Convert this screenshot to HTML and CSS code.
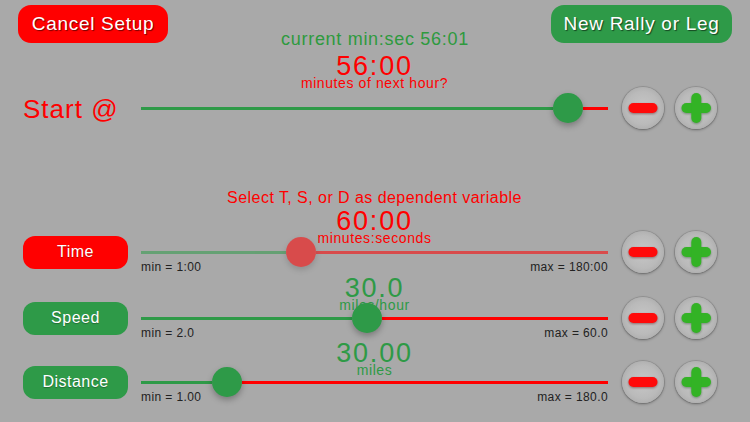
FILE: index.html
```html
<!DOCTYPE html>
<html>
<head>
<meta charset="utf-8">
<title>Rally Setup</title>
<link rel="stylesheet" href="styles.css">
</head>
<body>
<div class="screen">
  <header class="topbar">
    <button class="pill pill-red pill-top">Cancel Setup</button>
    <div class="current">current min:sec 56:01</div>
    <button class="pill pill-green pill-top pill-right">New Rally or Leg</button>
  </header>

  <section class="block block-start">
    <div class="value red">56:00</div>
    <div class="unit red">minutes of next hour?</div>
    <div class="ctrl">
      <div class="label-cell"><span class="start-label">Start @</span></div>
      <div class="track">
        <span class="seg seg-green" style="width:412px"></span>
        <span class="thumb thumb-green"></span>
        <span class="seg seg-red"></span>
      </div>
      <div class="steppers">
        <button class="step"><svg viewBox="0 0 42 42" width="42" height="42"><rect class="minus" x="6.5" y="16" width="29" height="10" rx="5"/></svg></button>
        <button class="step"><svg viewBox="0 0 42 42" width="42" height="42"><g class="plus"><rect x="6.5" y="16" width="29.5" height="10" rx="5"/><rect x="16.3" y="6" width="10" height="30" rx="5"/></g></svg></button>
      </div>
    </div>
  </section>

  <section class="block block-time">
    <div class="prompt red">Select T, S, or D as dependent variable</div>
    <div class="value red">60:00</div>
    <div class="unit red">minutes:seconds</div>
    <div class="ctrl">
      <div class="label-cell"><button class="pill pill-red pill-label">Time</button></div>
      <div class="track disabled">
        <span class="seg seg-green" style="width:145px"></span>
        <span class="thumb thumb-red"></span>
        <span class="seg seg-red"></span>
      </div>
      <div class="steppers">
        <button class="step"><svg viewBox="0 0 42 42" width="42" height="42"><rect class="minus" x="6.5" y="16" width="29" height="10" rx="5"/></svg></button>
        <button class="step"><svg viewBox="0 0 42 42" width="42" height="42"><g class="plus"><rect x="6.5" y="16" width="29.5" height="10" rx="5"/><rect x="16.3" y="6" width="10" height="30" rx="5"/></g></svg></button>
      </div>
      <div class="minmax"><span>min = 1:00</span><span>max = 180:00</span></div>
    </div>
  </section>

  <section class="block block-speed">
    <div class="value green">30.0</div>
    <div class="unit green">miles/hour</div>
    <div class="ctrl">
      <div class="label-cell"><button class="pill pill-green pill-label">Speed</button></div>
      <div class="track">
        <span class="seg seg-green" style="width:211px"></span>
        <span class="thumb thumb-green"></span>
        <span class="seg seg-red"></span>
      </div>
      <div class="steppers">
        <button class="step"><svg viewBox="0 0 42 42" width="42" height="42"><rect class="minus" x="6.5" y="16" width="29" height="10" rx="5"/></svg></button>
        <button class="step"><svg viewBox="0 0 42 42" width="42" height="42"><g class="plus"><rect x="6.5" y="16" width="29.5" height="10" rx="5"/><rect x="16.3" y="6" width="10" height="30" rx="5"/></g></svg></button>
      </div>
      <div class="minmax"><span>min = 2.0</span><span>max = 60.0</span></div>
    </div>
  </section>

  <section class="block block-dist">
    <div class="value green">30.00</div>
    <div class="unit green">miles</div>
    <div class="ctrl">
      <div class="label-cell"><button class="pill pill-green pill-label">Distance</button></div>
      <div class="track">
        <span class="seg seg-green" style="width:71px"></span>
        <span class="thumb thumb-green"></span>
        <span class="seg seg-red"></span>
      </div>
      <div class="steppers">
        <button class="step"><svg viewBox="0 0 42 42" width="42" height="42"><rect class="minus" x="6.5" y="16" width="29" height="10" rx="5"/></svg></button>
        <button class="step"><svg viewBox="0 0 42 42" width="42" height="42"><g class="plus"><rect x="6.5" y="16" width="29.5" height="10" rx="5"/><rect x="16.3" y="6" width="10" height="30" rx="5"/></g></svg></button>
      </div>
      <div class="minmax"><span>min = 1.00</span><span>max = 180.0</span></div>
    </div>
  </section>
</div>
</body>
</html>
```

FILE: styles.css
```css
* { box-sizing: border-box; }

html, body {
  margin: 0;
  padding: 0;
  background: #a9a9a9;
}

.screen {
  width: 750px;
  height: 422px;
  overflow: hidden;
  background: #a9a9a9;
  font-family: "Liberation Sans", Arial, sans-serif;
}

button {
  font-family: inherit;
  border: none;
  padding: 0;
  margin: 0;
  cursor: default;
}

.red { color: #ff0000; }
.green { color: #2e9a46; }

/* ---------- top bar ---------- */
.topbar {
  display: grid;
  grid-template-columns: 1fr auto 1fr;
  height: 49px;
  padding: 5px 18px 0 18px;
}

.pill {
  display: flex;
  align-items: center;
  justify-content: center;
  color: #fff;
}

.pill-red { background: #ff0000; }
.pill-green { background: #2e9a48; }

.pill-top {
  align-self: start;
  height: 38px;
  border-radius: 13px;
  font-size: 19px;
  letter-spacing: 0.7px;
  text-shadow: 1px 1px 1px rgba(0, 0, 0, 0.55);
  justify-self: start;
  width: 150px;
}

.pill-right {
  justify-self: end;
  width: 181px;
}

.current {
  align-self: end;
  font-size: 18px;
  line-height: 20px;
  letter-spacing: 0.7px;
  color: #2e9a3e;
  text-align: center;
}

/* ---------- value blocks ---------- */
.value, .unit, .prompt {
  margin-left: 141px;
  width: 467px;
  text-align: center;
  white-space: nowrap;
}

.value {
  font-size: 27px;
  line-height: 22px;
  letter-spacing: 1.8px;
}

.unit {
  font-size: 14px;
  line-height: 12px;
  letter-spacing: 0.6px;
}

.prompt {
  font-size: 16px;
  line-height: 18px;
  letter-spacing: 0.45px;
}

/* ---------- control rows ---------- */
.ctrl {
  display: grid;
  grid-template-columns: 141px 467px auto;
  grid-template-rows: 42px auto;
  align-items: center;
}

.label-cell {
  padding-left: 23px;
  display: flex;
  align-items: center;
}

.start-label {
  color: #ff0000;
  font-size: 26px;
  letter-spacing: 1px;
  padding-top: 2px;
}

.pill-label {
  width: 105px;
  height: 33px;
  border-radius: 12px;
  font-size: 16px;
  letter-spacing: 0.5px;
  text-shadow: 0 1px 1px rgba(0, 0, 0, 0.3);
}

.track {
  display: flex;
  align-items: center;
  height: 42px;
}

.track.disabled { opacity: 0.55; }

.seg {
  display: block;
  height: 3px;
  flex: 0 0 auto;
}

.seg-green { background: #2e9a48; }
.seg-red { background: #ff0000; flex: 1 1 auto; }

.thumb {
  position: relative;
  display: block;
  width: 30px;
  height: 30px;
  border-radius: 50%;
  flex: 0 0 30px;
  box-shadow: 0 3px 6px rgba(0, 0, 0, 0.28);
}

.thumb-green { background: #2e9a48; }
.thumb-red { background: #ff0000; }

.steppers {
  display: flex;
  align-items: center;
  gap: 11px;
  padding-left: 14px;
}

.step {
  width: 42px;
  height: 42px;
  border-radius: 50%;
  background: radial-gradient(circle at 50% 50%, #c6c6c6 0%, #bababa 55%, #a0a0a0 100%);
  box-shadow: 0 0 0 1px rgba(0, 0, 0, 0.1), 0 1px 3px rgba(0, 0, 0, 0.35);
  display: block;
}

.step svg { display: block; }

.minus {
  fill: #ff0a0a;
  filter: drop-shadow(0 1px 1px rgba(90, 0, 0, 0.45));
}

.plus {
  fill: #33b325;
  filter: drop-shadow(0 1px 1px rgba(0, 60, 0, 0.4));
}

.minmax {
  grid-column: 2;
  grid-row: 2;
  margin-top: -13px;
  display: flex;
  justify-content: space-between;
  font-size: 12px;
  line-height: 12px;
  letter-spacing: 0.4px;
  color: #222;
}

/* ---------- vertical rhythm ---------- */
.block-start .value { margin-top: 6px; }
.block-start .ctrl { margin-top: -2px; }

.block-time .prompt { margin-top: 60px; }
.block-time .value { margin-top: 3px; }
.block-time .ctrl { margin-top: -13px; }

.block-speed .value { margin-top: 4px; }
.block-speed .ctrl { margin-top: -14px; }

.block-dist .value { margin-top: 3px; }
.block-dist .ctrl { margin-top: -15px; }
```
